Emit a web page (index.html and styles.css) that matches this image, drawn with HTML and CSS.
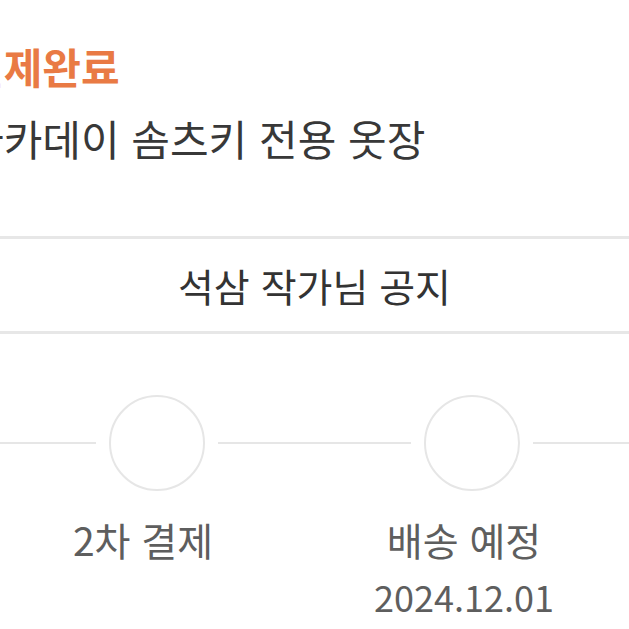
FILE: index.html
```html
<!DOCTYPE html>
<html lang="ko">
<head>
    <meta charset="UTF-8">
    <meta name="viewport" content="width=device-width, initial-scale=1.0">
    <title>주문 상세</title>
    <link rel="stylesheet" href="styles.css">
</head>
<body>
    <div class="summary">
        <div class="status">결제완료</div>
        <div class="product">아카데이 솜츠키 전용 옷장</div>
    </div>

    <div class="notice">석삼 작가님 공지</div>

    <div class="steps">
        <div class="track">
            <span class="line"></span>
            <span class="dot"></span>
            <span class="line wide"></span>
            <span class="dot"></span>
            <span class="line"></span>
        </div>
        <div class="labels">
            <div class="label">2차 결제</div>
            <div class="label">
                배송 예정
                <div class="date">2024.12.01</div>
            </div>
        </div>
    </div>
</body>
</html>
```

FILE: styles.css
```css
body {
    margin: 0;
    width: 629px;
    overflow: hidden;
    background: #fff;
    font-family: "Noto Sans CJK KR", "Noto Sans", sans-serif;
    color: #333;
}
.summary {
    margin-left: -35px;
    padding-top: 36px;
    height: 200px;
    white-space: nowrap;
}
.status {
    font-size: 42px;
    font-weight: 700;
    line-height: 60px;
    color: #e97a44;
}
.product {
    font-size: 42px;
    line-height: 60px;
    margin-top: 12px;
    color: #383838;
}
.notice {
    border-top: 3px solid #e7e7e7;
    border-bottom: 3px solid #e7e7e7;
    height: 92px;
    display: flex;
    align-items: center;
    justify-content: center;
    font-size: 39px;
    color: #333;
}
.steps {
    padding-top: 61px;
}
.track {
    display: flex;
    align-items: center;
    gap: 13px;
}
.line {
    flex: 1;
    height: 2px;
    background: #e6e6e6;
}
.line.wide {
    flex: 2;
}
.dot {
    width: 92px;
    height: 92px;
    border: 2px solid #e6e6e6;
    border-radius: 50%;
}
.labels {
    display: grid;
    grid-template-columns: 286px 356px;
    margin-top: 20px;
}
.label {
    text-align: center;
    font-size: 39px;
    line-height: 56px;
    color: #5e5e5e;
}
.date {
    font-size: 36px;
    line-height: 54px;
    margin-top: 2px;
}
```
